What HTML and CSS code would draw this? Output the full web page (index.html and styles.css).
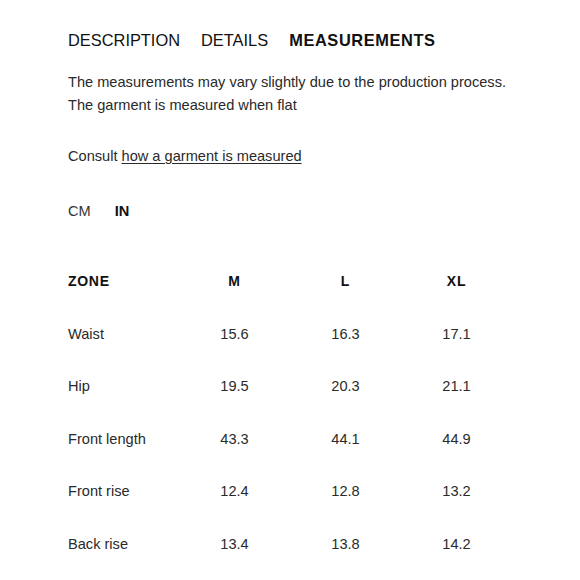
FILE: index.html
```html
<!DOCTYPE html>
<html>
<head>
<meta charset="utf-8">
<link rel="stylesheet" href="styles.css">
</head>
<body>
<div class="page">
  <nav class="tabs">
    <span class="tab">DESCRIPTION</span>
    <span class="tab">DETAILS</span>
    <span class="tab active">MEASUREMENTS</span>
  </nav>
  <p class="note">The measurements may vary slightly due to the production process.<br>The garment is measured when flat</p>
  <p class="consult">Consult <a class="link" href="#">how a garment is measured</a></p>
  <div class="units">
    <span class="unit">CM</span>
    <span class="unit active">IN</span>
  </div>
  <div class="table">
    <div class="row head">
      <div class="cell zone">ZONE</div>
      <div class="cell">M</div>
      <div class="cell">L</div>
      <div class="cell">XL</div>
    </div>
    <div class="row">
      <div class="cell zone">Waist</div>
      <div class="cell">15.6</div>
      <div class="cell">16.3</div>
      <div class="cell">17.1</div>
    </div>
    <div class="row">
      <div class="cell zone">Hip</div>
      <div class="cell">19.5</div>
      <div class="cell">20.3</div>
      <div class="cell">21.1</div>
    </div>
    <div class="row">
      <div class="cell zone">Front length</div>
      <div class="cell">43.3</div>
      <div class="cell">44.1</div>
      <div class="cell">44.9</div>
    </div>
    <div class="row">
      <div class="cell zone">Front rise</div>
      <div class="cell">12.4</div>
      <div class="cell">12.8</div>
      <div class="cell">13.2</div>
    </div>
    <div class="row">
      <div class="cell zone">Back rise</div>
      <div class="cell">13.4</div>
      <div class="cell">13.8</div>
      <div class="cell">14.2</div>
    </div>
  </div>
</div>
</body>
</html>
```

FILE: styles.css
```css
html, body {
  margin: 0;
  padding: 0;
  background: #ffffff;
}

.page {
  padding: 30px 68px 0 68px;
  font-family: "Liberation Sans", Arial, sans-serif;
  color: #222;
}

.tabs {
  display: flex;
  gap: 21px;
  font-size: 16.4px;
  line-height: 20px;
  color: #111;
}

.tab.active {
  font-weight: bold;
  letter-spacing: 0.6px;
}

.note {
  margin: 21px 0 0 0;
  font-size: 14.6px;
  line-height: 23px;
  color: #2a2a2a;
}

.consult {
  margin: 28px 0 0 0;
  font-size: 14.6px;
  line-height: 23px;
  color: #2a2a2a;
}

.link {
  color: #2a2a2a;
  text-decoration: underline;
  text-underline-offset: 2px;
}

.units {
  display: flex;
  gap: 24px;
  margin-top: 32px;
  font-size: 14.6px;
  line-height: 23px;
  color: #333;
}

.unit.active {
  font-weight: bold;
  color: #111;
}

.table {
  margin-top: 47px;
}

.row {
  display: grid;
  grid-template-columns: repeat(4, 1fr);
  height: 52.6px;
  align-items: start;
  font-size: 14.6px;
  line-height: 23px;
  color: #2a2a2a;
}

.cell {
  text-align: center;
}

.cell.zone {
  text-align: left;
}

.row.head {
  font-weight: bold;
  font-size: 14px;
  letter-spacing: 0.7px;
  color: #111;
}
```
